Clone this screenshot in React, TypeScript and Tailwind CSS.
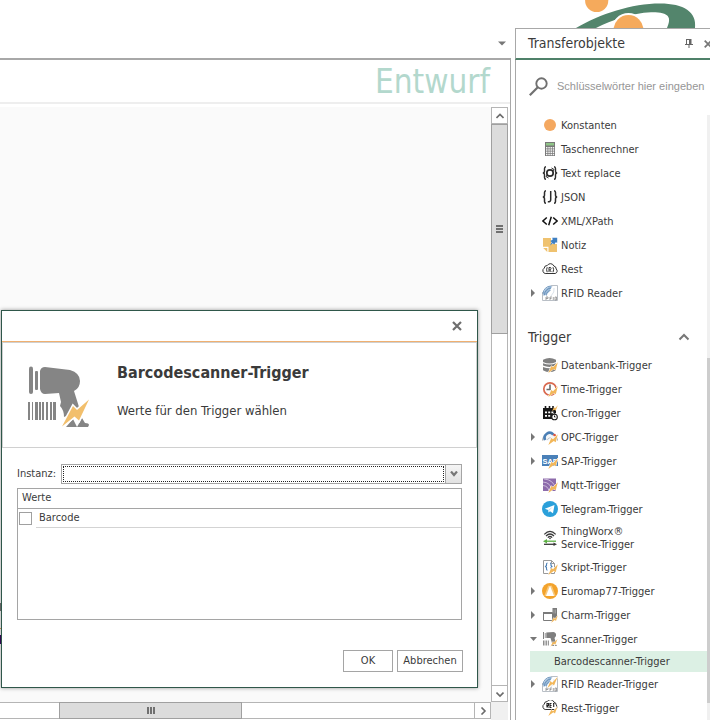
import type { ReactNode } from "react";

const Svg = ({ children }: { children: ReactNode }) => (
  <svg viewBox="0 0 16 16" className="size-4 shrink-0" aria-hidden="true">
    {children}
  </svg>
);

const Bolt = () => (
  <path d="M6.300 15.900 9.300 8.900 11 10.300 15.800 5.200 13.700 13.200 11.800 11.900Z" fill="#f2b75a" stroke="#fff" strokeWidth="1" paintOrder="stroke" />
);

const Rfid = () => (
  <>
    <path d="M.5 7V15.500H15.500V.5H9" fill="none" stroke="#b9bfc6" />
    <path d="M1 10.500A9.500 9.500 0 0 1 10.500 1L6.500 7.500 3 10.500Z" fill="#9dbbd8" />
    <path d="M1 9A8 8 0 0 1 9 1M2.500 10A7 7 0 0 1 9 3M4.500 10.500A5 5 0 0 1 8.500 5.500" fill="none" stroke="#5a87b4" strokeWidth=".8" />
    <path d="M4 15V12H6V13.500H4M8 15V12H10M8 13.500H9.500M11.300 12V15M13 12V15H14.500V12Z" fill="none" stroke="#8e8e8e" strokeWidth=".8" />
    <path d="M12 3Q13 7 9 11" fill="none" stroke="#dbe3ea" />
  </>
);

const Cloud = () => (
  <path d="M3.200 12.500A2.900 2.900 0 0 1 2.200 7.200 3 3 0 0 1 5.300 4.500 3.600 3.600 0 0 1 11.800 5 3 3 0 0 1 14.200 8 2.600 2.600 0 0 1 13.200 12.500Z" fill="#fff" stroke="#333" />
);

const braces = "M4 1.700Q2.500 1.700 2.500 3.500V6Q2.500 8 .8 8 2.500 8 2.500 10V12.500Q2.500 14.300 4 14.300M12 1.700Q13.500 1.700 13.500 3.500V6Q13.500 8 15.200 8 13.500 8 13.500 10V12.500Q13.500 14.300 12 14.300";

const icons: Record<string, ReactNode> = {
  circle: <circle cx="8" cy="8" r="6" fill="#f4a860" />,
  calc: (
    <>
      <path d="M3 1H13V15H3Z" fill="#787878" />
      <path d="M4 2H12V4.500H4Z" fill="#8fc487" />
      <path d="M4 6h1.500v1.500H4zM6.300 6h1.500v1.500H6.300zM8.500 6H10v1.500H8.500zM10.700 6h1.500v1.500h-1.500zM4 8.300h1.500v1.500H4zM6.300 8.300h1.500v1.500H6.300zM8.500 8.300H10v1.500H8.500zM10.700 8.300h1.500v1.500h-1.500zM4 10.600h1.500v1.500H4zM6.300 10.600h1.500v1.500H6.300zM8.500 10.600H10v1.500H8.500zM10.700 10.600h1.500v1.500h-1.500zM4 12.800h1.500v1.500H4zM6.300 12.800h1.500v1.500H6.300zM8.500 12.800H10v1.500H8.500zM10.700 12.800h1.500v1.500h-1.500z" fill="#f5f5f5" />
    </>
  ),
  replace: (
    <g fill="none" stroke="#2b2b2b" strokeWidth="1.400">
      <path d={braces} />
      <circle cx="8" cy="8" r="3.200" strokeWidth="1.700" />
      <path d="M9.500 3 12 4.500 10.500 6.500M6.500 13 4 11.500 5.500 9.500" strokeWidth="1" />
    </g>
  ),
  json: (
    <g fill="none" stroke="#2b2b2b" strokeWidth="1.500">
      <path d={braces} />
      <path d="M8.700 2V10.800Q8.700 13 5.800 12.800" />
    </g>
  ),
  xml: <path d="M4.800 4.500.9 8 4.800 11.500M11.200 4.500 15.100 8 11.200 11.500M9.300 3.800 6.700 12.200" fill="none" stroke="#111" strokeWidth="1.500" />,
  note: (
    <>
      <path d="M1 1H9L9 7H15V15H6.500V9.800H1Z" fill="#efc26f" />
      <path d="M1.200 11H5.300V15Z" fill="#efc26f" />
      <path d="M10.200.8 15.200.8 15.200 5.800 13.700 5.300 12.200 7.500 10.800 6.200 8 8.500 9.700 5.200 8.300 4 10.800 2.500Z" fill="#3f7fc1" />
    </>
  ),
  rest: (
    <>
      <Cloud />
      <path d="M7 11V6.500H8.600Q9.500 7.500 8.500 8.700H7.500L9.300 11M5.200 6.200Q4 8.700 5.200 11.200M11 6.200Q12.200 8.700 11 11.200" fill="none" stroke="#333" strokeWidth="1" />
    </>
  ),
  rfid: <Rfid />,
  rfidTrigger: (
    <>
      <Rfid />
      <path d="M5.500 12 8.500 5 10.200 6.700 15.700.8 12 9.500 10.300 8Z" fill="#f2b75a" stroke="#fff" strokeWidth=".8" paintOrder="stroke" />
    </>
  ),
  database: (
    <>
      <path d="M1 2.800Q7.500-.8 14 2.800V5Q7.500 8 1 5ZM1 6.200Q7.500 9 14 6.200V8.600Q7.500 11.500 1 8.600ZM1 10Q7.500 12.500 14 10V13.200Q7.500 17 1 13.200Z" fill="#808080" />
      <Bolt />
    </>
  ),
  time: (
    <>
      <circle cx="8" cy="8" r="6.200" fill="#fff" stroke="#d9694f" strokeWidth="1.700" />
      <path d="M8 3.500V8.500H4.500" fill="none" stroke="#6b6b6b" strokeWidth="1.600" />
      <Bolt />
    </>
  ),
  cron: (
    <>
      <path d="M1 3H14V8H11V14H1Z" fill="#181818" />
      <path d="M3.500 1V4.500M7.500 1V4.500M11 1V4.500" stroke="#181818" strokeWidth="1.600" />
      <path d="M3 6.500h2v1.800H3zM6.200 6.500h2v1.800h-2zM9.400 6.500h2v1.800h-2zM3 10h2v1.800H3zM6.200 10h2v1.800h-2z" fill="#fff" />
      <path d="M10 6 12 2.200 13 3.200 15.800.2 13.700 5.700 12.500 4.700Z" fill="#f2b75a" />
      <circle cx="12.500" cy="12" r="2.800" fill="#fff" stroke="#181818" strokeWidth="1.100" />
      <path d="M12.500 10.500V12H13.500M11.500 8.300H13.500" fill="none" stroke="#181818" />
    </>
  ),
  opc: (
    <>
      <path d="M.7 11.500A7.300 7.300 0 1 1 15.300 11.500" fill="#f4f6f8" stroke="#8a8f94" />
      <path d="M3.200 11A4.900 4.900 0 0 1 11.200 5.500" fill="none" stroke="#4b7fb5" strokeWidth="2.600" />
      <path d="M5.500 11A2.500 2.500 0 0 1 10 10" fill="#fff" stroke="#b9bfc6" />
      <circle cx="12.500" cy="6" r="1.300" fill="#e0523c" />
      <Bolt />
    </>
  ),
  sap: (
    <>
      <path d="M0 2H16V13H0Z" fill="#4a80b8" />
      <text x=".4" y="10.800" fontFamily="Liberation Sans" fontWeight="bold" fontSize="7.500" fill="#fff">SAP</text>
      <Bolt />
    </>
  ),
  mqtt: (
    <>
      <path d="M1 1.500H14V14H1Z" fill="#8d6bab" />
      <path d="M1 5Q9 5.500 10 14M1 8.500Q6 9 7 14M2 2Q11 2.500 13.500 11" fill="none" stroke="#d2c3df" strokeWidth=".9" />
      <Bolt />
    </>
  ),
  telegram: (
    <>
      <circle cx="8" cy="8" r="8" fill="#2ba0da" />
      <path d="M2.800 7.800 12.500 4 11 12.300 8 10.200 6.500 11.600 6.200 9Z" fill="#fff" />
      <path d="M6.200 9 10.800 5.700 7.200 9.600 6.500 11.600Z" fill="#bcdcf0" />
    </>
  ),
  thingworx: (
    <>
      <path d="M2.300 4.300Q8-1.500 13.700 4.300M4 6Q8 2 12 6M5.800 7.600Q8 5.400 10.200 7.600" fill="none" stroke="#3a3a3a" strokeWidth="1.200" />
      <circle cx="8" cy="8.500" r=".8" fill="#3a3a3a" />
      <path d="M4 11.200H14" stroke="#5db045" strokeWidth="1.300" />
      <path d="M1 11.200 5 8.900V13.500Z" fill="#5db045" />
      <path d="M2 14.300H12" stroke="#3a3a3a" strokeWidth="1.300" />
      <path d="M15 14.300 11.500 12.500V16Z" fill="#3a3a3a" />
    </>
  ),
  script: (
    <>
      <path d="M1.500 1.500H9.500L12.500 4.500V14.500H1.500Z" fill="#fff" stroke="#9a9a9a" />
      <path d="M9.500 1.500V4.500H12.500" fill="none" stroke="#9a9a9a" />
      <path d="M5.500 4Q4.500 4 4.500 5.200V6.500L3.500 7.500 4.500 8.500V10Q4.500 11.200 5.500 11.200M8 4Q9 4 9 5.200V6.500L10 7.500 9 8.500V10Q9 11.200 8 11.200" fill="none" stroke="#4b7fb5" strokeWidth="1.100" />
      <Bolt />
    </>
  ),
  euromap: (
    <>
      <circle cx="8" cy="8" r="8" fill="#f3a32c" />
      <path d="M6.200 2.500 8 3 5 13H2.300ZM9.800 2.500 8 3 11 13H13.700Z" fill="#f8c87a" />
      <path d="M8 2.500 12 13H4Z" fill="#fff" />
    </>
  ),
  charm: (
    <>
      <path d="M1.500 5.500H10.500V13.500H1.500Z" fill="#fff" stroke="#7b7b7b" />
      <path d="M1 5H10V7H1Z" fill="#7b7b7b" />
      <path d="M10.500 1H15V11H10.500Z" fill="#7b7b7b" />
      <path d="M12 2.500V6.500M13.500 2.500V6.500" stroke="#b7b7b7" strokeWidth=".6" />
      <path d="M9.200 15.800 11.700 10.500 13 11.700 15.800 8.200 14 14 12.800 13Z" fill="#f2b75a" stroke="#fff" strokeWidth=".6" paintOrder="stroke" />
    </>
  ),
  scanner: (
    <>
      <path d="M1 1H2V8H1ZM2.800 2H3.600V7H2.800ZM4.300 1.500 11.500 1Q14.500 1.500 14 5L12.500 7 14 12H10L8.500 7H4.300ZM9.500 15 11 12.800 12.200 15ZM12.500 15 14 13.500 15 15Z" fill="#7f7f7f" />
      <path d="M1.500 9.500V14.500M3 9.500V14.500M4.600 9.500V14.500M6.400 9.500V14.500" stroke="#7f7f7f" strokeWidth=".9" />
      <path d="M8.500 15.500 11 10.500 12 11.500 15.500 8 13.300 13.800 12 12.800Z" fill="#f2b75a" stroke="#fff" strokeWidth=".6" paintOrder="stroke" />
    </>
  ),
  restTrigger: (
    <>
      <g transform="translate(0 -3)">
        <Cloud />
        <path d="M5 10.500V6.500H6.500V8.500H5L6.500 10.500M9.500 6.500H8V10.500H9.500M8 8.500H9.500M11 6.500H12.500M11.700 6.500V10" fill="none" stroke="#222" strokeWidth="1.100" />
      </g>
      <path d="M6.300 16 9.300 9.700 11 11.200 15.500 6.500 13 13.500 11.300 12.300Z" fill="#f2b75a" stroke="#fff" strokeWidth=".8" paintOrder="stroke" />
    </>
  ),
};

type Item = { label: string; second?: string; icon: string; arrow?: "right" | "down"; child?: string };

const objects: Item[] = [
  { label: "Konstanten", icon: "circle" },
  { label: "Taschenrechner", icon: "calc" },
  { label: "Text replace", icon: "replace" },
  { label: "JSON", icon: "json" },
  { label: "XML/XPath", icon: "xml" },
  { label: "Notiz", icon: "note" },
  { label: "Rest", icon: "rest" },
  { label: "RFID Reader", icon: "rfid", arrow: "right" },
];

const triggers: Item[] = [
  { label: "Datenbank-Trigger", icon: "database" },
  { label: "Time-Trigger", icon: "time" },
  { label: "Cron-Trigger", icon: "cron" },
  { label: "OPC-Trigger", icon: "opc", arrow: "right" },
  { label: "SAP-Trigger", icon: "sap", arrow: "right" },
  { label: "Mqtt-Trigger", icon: "mqtt" },
  { label: "Telegram-Trigger", icon: "telegram" },
  { label: "ThingWorx®", second: "Service-Trigger", icon: "thingworx" },
  { label: "Skript-Trigger", icon: "script" },
  { label: "Euromap77-Trigger", icon: "euromap", arrow: "right" },
  { label: "Charm-Trigger", icon: "charm", arrow: "right" },
  { label: "Scanner-Trigger", icon: "scanner", arrow: "down", child: "Barcodescanner-Trigger" },
  { label: "RFID Reader-Trigger", icon: "rfidTrigger", arrow: "right" },
  { label: "Rest-Trigger", icon: "restTrigger" },
];

const Tree = ({ items }: { items: Item[] }) => (
  <ul>
    {items.map((item) => (
      <li key={item.label}>
        <button type="button" className={`flex w-full items-center pl-[14px] text-left ${item.second ? "h-[34px]" : "h-6"}`}>
          <span className="w-3 shrink-0">
            {item.arrow === "right" && (
              <svg viewBox="0 0 6 8" className="ml-px h-2 w-[6px]"><path d="M0 0 4 4 0 8Z" fill="#777" /></svg>
            )}
            {item.arrow === "down" && (
              <svg viewBox="0 0 8 6" className="h-[6px] w-2"><path d="M0 1H7L3.500 5Z" fill="#777" /></svg>
            )}
          </span>
          <Svg>{icons[item.icon]}</Svg>
          <span className="pl-[3px] leading-[13px] whitespace-nowrap">
            {item.label}
            {item.second && <span className="block">{item.second}</span>}
          </span>
        </button>
        {item.child && (
          <button type="button" className="ml-[14px] flex h-[21px] w-[calc(100%-14px)] items-center bg-[#dcf0e4] pt-[2px] pl-6 text-left whitespace-nowrap">
            {item.child}
          </button>
        )}
      </li>
    ))}
  </ul>
);

const Logo = () => (
  <svg viewBox="575 0 135 28" className="h-7 w-[135px]" aria-hidden="true">
    <path d="M576 28C600 14 632 3.500 660 3.500 684 3.500 697 12 695 28H667C672 17 669 12 651 12.300 632 13 612 20 596 28Z" fill="#53856c" />
    <circle cx="596.700" cy=".5" r="11.600" fill="#f5aa5c" />
    <circle cx="628.500" cy="30" r="17" fill="#fff" />
    <circle cx="628.500" cy="30" r="15" fill="#f5aa5c" />
  </svg>
);

const ScannerPicture = () => (
  <svg viewBox="28 366 64 64" className="size-16" aria-hidden="true">
    <g fill="#858585">
      <rect x="29" y="366.500" width="4" height="27.500" rx="2" />
      <rect x="35" y="371" width="3" height="19" rx="1" />
      <path d="M40 371Q41 367 45 367L70 370Q80 373 80 381 80 388 74 391L79 407 71 414 64 417Q64 410 60 406L61 402 59 393 45 394Q41 394 40 389Z" />
      <path d="M28 402h2v18h-2zM32 402h1v18h-1zM35 402h3v18h-3zM39 402h2v18h-2zM42 402h2v18h-2zM46 402h2v18h-2zM50 402h2v18h-2zM53 402h3v18h-3z" />
      <path d="M66 427 73 419 77 427ZM77 427 82 418 85 423Q89 423 89 425L88 427Z" />
    </g>
    <path d="M62 426.500 73 406 77 410 89 399.500 79 420.500 74.500 416.500Z" fill="#f2bf6c" stroke="#fff" strokeWidth="3" paintOrder="stroke" />
  </svg>
);

const Dialog = () => (
  <section role="dialog" aria-label="Barcodescanner-Trigger" className="absolute top-[310px] left-px flex h-[378px] w-[477px] flex-col border border-[#2f574a] bg-white shadow-[0_0_4px_rgba(0,0,0,0.4)]">
    <div className="flex h-[31px] shrink-0 items-center justify-end border-b border-[#f0b070] pr-[15px]">
      <button type="button" aria-label="Schließen">
        <svg viewBox="0 0 10 10" className="size-[10px]"><path d="M1 1 9 9M9 1 1 9" stroke="#6e6e6e" strokeWidth="2.200" /></svg>
      </button>
    </div>
    <header className="flex h-[106px] shrink-0 border border-[#d0d0d0] pt-[23px] pl-[25px]">
      <ScannerPicture />
      <div className="pl-[25px]">
        <h1 className="-mt-[3px] text-[16px] leading-5 font-bold">Barcodescanner-Trigger</h1>
        <p className="mt-5 text-[13px] leading-4">Werte für den Trigger wählen</p>
      </div>
    </header>
    <div className="flex flex-1 flex-col px-[15px] pt-4">
      <div className="flex h-5 items-center">
        <label htmlFor="instance" className="w-11 shrink-0">Instanz:</label>
        <div className="flex h-5 flex-1 border border-[#a5a5a5]">
          <select id="instance" className="m-px flex-1 appearance-none border border-dotted border-[#222] bg-white outline-none">
            <option></option>
          </select>
          <span className="flex w-4 items-center justify-center border-l border-[#a5a5a5] bg-gradient-to-b from-[#f5f5f5] to-[#e2e2e2]">
            <svg viewBox="0 0 8 6" className="h-[6px] w-2"><path d="M1 .5 4 4 7 .5" fill="none" stroke="#777" strokeWidth="2.200" /></svg>
          </span>
        </div>
      </div>
      <div className="mt-1 h-[132px] border border-[#a5a5a5]">
        <table className="w-full border-separate border-spacing-0 text-left">
          <thead>
            <tr><th colSpan={2} className="h-5 border-b border-[#a5a5a5] p-0 pl-1 font-normal">Werte</th></tr>
          </thead>
          <tbody>
            <tr>
              <td className="h-[19px] w-[18px] p-0 pl-px">
                <input id="barcode" type="checkbox" className="block size-[13px] appearance-none border border-[#a0a0a0] bg-white checked:bg-[#53856c]" />
              </td>
              <td className="h-[19px] border-b border-[#d3d3d3] p-0 pl-[3px]"><label htmlFor="barcode">Barcode</label></td>
            </tr>
          </tbody>
        </table>
      </div>
      <div className="-mr-px mt-[30px] flex justify-end gap-1">
        <button type="button" className="h-[22px] w-[50px] border border-[#a5a5a5]">OK</button>
        <button type="button" className="h-[22px] w-[66px] border border-[#a5a5a5]">Abbrechen</button>
      </div>
    </div>
  </section>
);

const scrollButton = "flex size-[17px] shrink-0 items-center justify-center border border-[#b5b5b5] bg-white";

const Chevron = ({ d }: { d: string }) => (
  <svg viewBox="0 0 8 8" className="size-2" aria-hidden="true">
    <path d={d} fill="none" stroke="#6b6b6b" strokeWidth="1.600" />
  </svg>
);

export default function App() {
  return (
    <div className="relative flex h-screen gap-1 overflow-hidden bg-white font-['DejaVu_Sans_Condensed','Noto_Sans',sans-serif] text-[11px] text-[#3b3b3b]">
      <main className="flex min-w-0 flex-1 flex-col">
        <div className="flex h-[58px] shrink-0 items-end justify-end pr-[5px] pb-3">
          <button type="button" aria-label="Fensterliste">
            <svg viewBox="0 0 8 5" className="h-[5px] w-2"><path d="M0 .5H8L4 4.500Z" fill="#777" /></svg>
          </button>
        </div>
        <div className="flex min-h-0 flex-1 flex-col border-t-2 border-r border-[#a8a8a8]">
          <h2 className="h-11 shrink-0 border-b-2 border-[#eeeeee] pr-5 text-right text-[33px] leading-[43px] text-[#b3d8cd]">Entwurf</h2>
          <div className="flex min-h-0 flex-1 pt-[3px] pr-[2px]">
            <div className="flex min-w-0 flex-1 flex-col">
              <div className="relative flex-1 bg-[#fafafa]">
                <i className="absolute top-[496px] left-0 h-2 w-px bg-[#777]" />
                <i className="absolute top-[521px] left-0 h-px w-px bg-[#e0a060]" />
                <i className="absolute top-[528px] left-0 h-[9px] w-px bg-[#3a0a60]" />
              </div>
              <div className="flex h-[17px] shrink-0 bg-white">
                <div className="w-[59px] border-y border-[#b5b5b5]" />
                <div className="flex w-[183px] items-center justify-center gap-px border border-[#a0a0a0] bg-[#dcdcdc]">
                  <i className="h-[7px] w-[2px] bg-[#707070]" />
                  <i className="h-[7px] w-[2px] bg-[#707070]" />
                  <i className="h-[7px] w-[2px] bg-[#707070]" />
                </div>
                <div className="flex-1 border-y border-[#b5b5b5]" />
                <button type="button" aria-label="Nach rechts" className={scrollButton}><Chevron d="M2.500 .5 6 4 2.500 7.500" /></button>
              </div>
              <div className="h-px shrink-0" />
            </div>
            <div className="flex w-[17px] flex-col">
              <button type="button" aria-label="Nach oben" className={scrollButton}><Chevron d="M.5 6 4 2.500 7.500 6" /></button>
              <div className="flex h-[210px] shrink-0 flex-col items-center justify-center gap-px border border-[#a0a0a0] bg-[#dcdcdc]">
                <i className="h-[2px] w-[7px] bg-[#707070]" />
                <i className="h-[2px] w-[7px] bg-[#707070]" />
                <i className="h-[2px] w-[7px] bg-[#707070]" />
              </div>
              <div className="flex-1 border-x border-[#b5b5b5]" />
              <button type="button" aria-label="Nach unten" className={scrollButton}><Chevron d="M.5 2.500 4 6 7.500 2.500" /></button>
              <div className="h-[18px] shrink-0 bg-[#f0f0f0]" />
            </div>
          </div>
        </div>
      </main>

      <aside className="flex w-[195px] shrink-0 flex-col">
        <div className="flex h-7 shrink-0 justify-end"><Logo /></div>
        <div className="flex h-8 shrink-0 items-center border-t border-b-2 border-l border-t-[#a8a8a8] border-b-[#4f8169] border-l-[#a8a8a8] pl-3">
          <h2 className="flex-1 text-[14px]">Transferobjekte</h2>
          <button type="button" aria-label="Anheften" className="mr-[11px]">
            <svg viewBox="0 0 8 9" className="h-[9px] w-2"><path d="M1.500 0V5M1 .5H6M0 5.500H8M4 5.500V9" fill="none" stroke="#666" /><path d="M4 0H6.500V5H4Z" fill="#666" /></svg>
          </button>
          <button type="button" aria-label="Schließen" className="w-[6px] overflow-hidden">
            <svg viewBox="0 0 8 8" className="size-2 max-w-none"><path d="M.7 .7 7.300 7.300M7.300 .7.7 7.300" stroke="#777" strokeWidth="1.800" /></svg>
          </button>
        </div>
        <div className="flex min-h-0 flex-1 flex-col border-l border-[#a8a8a8]">
          <label className="flex h-[53px] shrink-0 items-center pl-[13px]">
            <svg viewBox="0 0 19 19" className="size-[19px] shrink-0" aria-hidden="true">
              <circle cx="12.500" cy="6.500" r="5.200" fill="none" stroke="#707070" strokeWidth="1.900" />
              <path d="M8.800 10.200.8 18.200" stroke="#707070" strokeWidth="2.200" />
            </svg>
            <input type="text" aria-label="Suche" placeholder="Schlüsselwörter hier eingeben" className="ml-[9px] w-full min-w-0 font-['Liberation_Sans',sans-serif] outline-none placeholder:text-[#969696]" />
          </label>
          <div className="flex min-h-0 flex-1">
            <nav className="min-w-0 flex-1 overflow-hidden">
              <Tree items={objects} />
              <button type="button" className="flex h-12 w-full items-center justify-between pt-4 pr-[17px] pl-3 text-[14px]">
                Trigger
                <svg viewBox="0 0 12 8" className="h-2 w-3"><path d="M1.500 6.500 6 2 10.500 6.500" fill="none" stroke="#777" strokeWidth="2" /></svg>
              </button>
              <Tree items={triggers} />
            </nav>
            <div className="mt-[2px] w-[3px] shrink-0 bg-[#f0f0f0] pt-[243px]">
              <div className="h-[345px] bg-[#cdcdcd]" />
            </div>
          </div>
        </div>
      </aside>
      <Dialog />
    </div>
  );
}
